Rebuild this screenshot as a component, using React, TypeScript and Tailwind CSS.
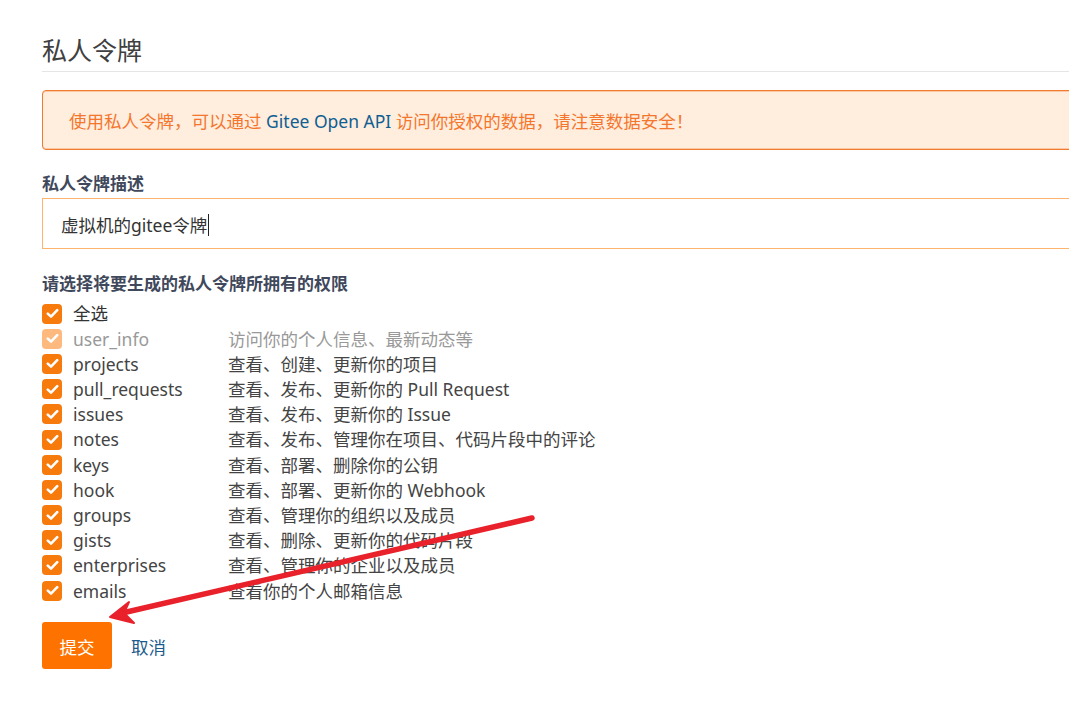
import React from "react";

const perms: [string, string][] = [
  ["projects", "查看、创建、更新你的项目"],
  ["pull_requests", "查看、发布、更新你的 Pull Request"],
  ["issues", "查看、发布、更新你的 Issue"],
  ["notes", "查看、发布、管理你在项目、代码片段中的评论"],
  ["keys", "查看、部署、删除你的公钥"],
  ["hook", "查看、部署、更新你的 Webhook"],
  ["groups", "查看、管理你的组织以及成员"],
  ["gists", "查看、删除、更新你的代码片段"],
  ["enterprises", "查看、管理你的企业以及成员"],
  ["emails", "查看你的个人邮箱信息"],
];

function Check({ light }: { light?: boolean }) {
  return (
    <span
      className={
        "flex h-[20px] w-[20px] shrink-0 items-center justify-center rounded-[4px] " +
        (light ? "bg-[#fdb97e]" : "bg-[#f77a0c]")
      }
    >
      <svg width="13" height="11" viewBox="0 0 13 11" fill="none">
        <path d="M1.8 5.6 L5 8.6 L11.2 2.2" stroke="white" strokeWidth="2.6" strokeLinecap="round" strokeLinejoin="round" />
      </svg>
    </span>
  );
}

export default function App() {
  return (
    <div
      className="relative h-[704px] w-full overflow-hidden bg-white text-[17.5px] text-[#444]"
      style={{ fontFamily: '"Noto Sans", "Noto Sans CJK SC", sans-serif' }}
    >
      <div className="ml-[42px] w-[1100px]">
        <h1 className="border-b border-[#e5e5e5] pt-[34px] pb-[5px] text-[25px] leading-[32px] text-[#404040]">
          私人令牌
        </h1>

        <div className="mt-[18px] flex h-[60px] items-center rounded-[4px] border border-[#f07a30] bg-[#ffeddd] pl-[26px] pt-[2px] shadow-[inset_0_1px_0_#fbc9a4,inset_0_-1px_0_#fbc9a4] text-[#f4762d]">
          <span>
            使用私人令牌，可以通过 <span className="text-[#0f5f93]">Gitee Open API</span> 访问你授权的数据，请注意数据安全！
          </span>
        </div>

        <div className="mt-[21px] text-[17px] font-bold leading-[25px] text-[#40485b]">私人令牌描述</div>
        <div className="mt-[2px] flex h-[51px] items-center border border-[#ffb46e] pl-[18px] pt-[3px] text-[#333]">
          虚拟机的gitee令牌<span className="ml-[1px] inline-block h-[22px] w-[1px] bg-[#222]" />
        </div>

        <div className="mt-[22px] text-[17px] font-bold leading-[25px] text-[#40485b]">
          请选择将要生成的私人令牌所拥有的权限
        </div>

        <div className="mt-[5px] flex flex-col">
          <div className="flex h-[25.2px] items-center">
            <Check />
            <span className="ml-[11px] text-[#333]">全选</span>
          </div>
          <div className="flex h-[25.2px] items-center text-[#999]">
            <Check light />
            <span className="ml-[11px] w-[155px]">user_info</span>
            <span>访问你的个人信息、最新动态等</span>
          </div>
          {perms.map(([k, d]) => (
            <div key={k} className="flex h-[25.2px] items-center">
              <Check />
              <span className="ml-[11px] w-[155px]">{k}</span>
              <span>{d}</span>
            </div>
          ))}
        </div>

        <div className="mt-[19px] flex items-center">
          <button className="h-[47px] w-[70px] rounded-[3px] bg-[#fe7300] pt-[2px] text-white">提交</button>
          <span className="ml-[19px] pt-[2px] text-[#1c5b8c]">取消</span>
        </div>
      </div>

      <svg className="pointer-events-none absolute left-0 top-0" width="1069" height="704">
        <line x1="532" y1="518" x2="118" y2="614" stroke="#e8212b" strokeWidth="5.5" strokeLinecap="round" />
        <path d="M110 617 L129 602 L124 613 L134 623 Z" fill="#e8212b" stroke="#e8212b" strokeWidth="2" strokeLinejoin="round" />
      </svg>
    </div>
  );
}
